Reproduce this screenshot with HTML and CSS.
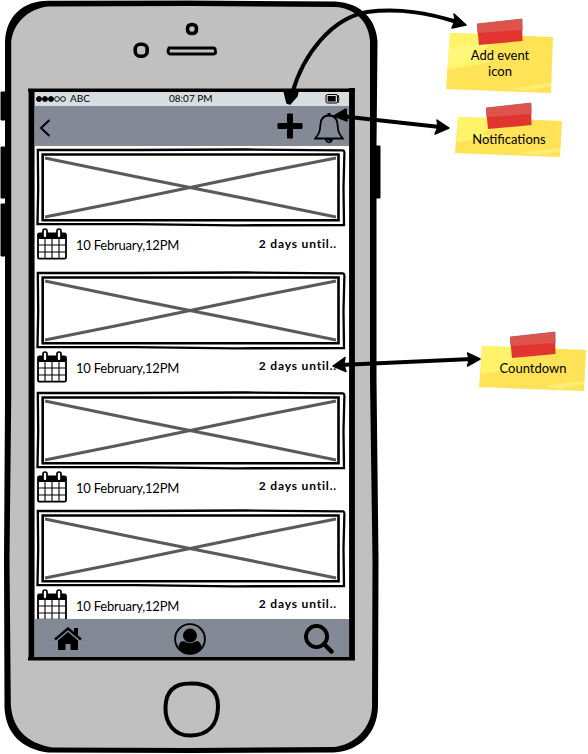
FILE: index.html
```
<!DOCTYPE html>
<html lang="en">
<head>
<meta charset="utf-8">
<title>Event list wireframe</title>
<link rel="stylesheet" href="styles.css">
</head>
<body>
<svg width="0" height="0" class="defs">
  <symbol id="frame" viewBox="0 0 314 80">
    <path d="M2.8 1.8L100 2L210 1.5L308 2.3Q309.8 2.5 309.3 8L308.5 40L309 77L200 77.3L100 76.2L2.5 76L3.2 40Z" fill="#fff" stroke="#000" stroke-width="2.3"/>
    <path d="M7.7 6.5H303.5V72.2H7.7Z" fill="none" stroke="#000" stroke-width="2.6"/>
    <path d="M10 10L100 28.5L155 39.5L225 53.5L301 69M10 69L80 55L155 39.5L225 25L301 10" fill="none" stroke="#5a5a5a" stroke-width="3.1"/>
  </symbol>
  <symbol id="calendar" viewBox="0 0 30 32">
    <rect x="1" y="5.3" width="28" height="25.4" rx="1.5" fill="#fff" stroke="#000" stroke-width="1.8"/>
    <rect x="1" y="5" width="28" height="6" fill="#000"/>
    <path d="M8 11v19M15 11v19M22 11v19M1 17h28M1 24h28" stroke="#000" stroke-width="1.1"/>
    <rect x="6" y="1" width="4" height="9" rx="2" fill="#fff" stroke="#000" stroke-width="1.7"/>
    <rect x="20" y="1" width="4" height="9" rx="2" fill="#fff" stroke="#000" stroke-width="1.7"/>
  </symbol>
  <symbol id="note-tape" viewBox="0 0 48 28">
    <path d="M1 6L46 1L46.5 23L3 27Z" fill="#e2342f"/>
    <path d="M1 6L46 1L46.3 12L1.5 15Z" fill="#de544d"/>
    <path d="M1 6L46 1V12" fill="none" stroke="#a66" stroke-width=".8"/>
  </symbol>
</svg>

<main class="canvas">
  <svg class="device" width="588" height="754" viewBox="0 0 588 754">
    <path d="M1 92h10v28H1zM1 147h10v51H1zM1 204h10v52H1zM372 146h8v52h-8z" stroke="#000" stroke-width="1"/>
    <path d="M48 0.800L190 0.500L335 1.500C362 3 376 20 377.500 41L376.500 146V380L378.500 560L378 707C377 735 358 751 334 752.500L190 753L48 752.500C22 749 6 734 4.500 708L4 560L5 400L5 42C6 16 23 1 48 0.800Z"/>
    <path d="M48 6.500L190 6L335 7C356 8 369 23 370 41L370 380L372.500 560L372 707C371 729 354 745 334 747L190 748L52 747.500C26 743 12 728 10.800 704L9.500 560L11.200 400L11.200 42C13 24 27 9 48 6.500Z" fill="#c0c0c0"/>
    <path d="M192 24.500C195.500 24.500 196.500 26 196.500 29C196.500 32 195 33.500 192 33.500C188.500 33.500 187.500 32 187.500 29C187.500 26 189 24.500 192 24.500Z" fill="none" stroke="#000" stroke-width="3.600"/>
    <rect x="135.200" y="44.200" width="12" height="12" rx="5" fill="none" stroke="#000" stroke-width="3.600"/>
    <path d="M169 48L214 48Q215.500 48 215.500 53Q215 54 212 54L171 54Q168 54 168 51Z" fill="none" stroke="#000" stroke-width="2.900"/>
    <path d="M28 90.200H355M28 658.700H355" stroke="#000" stroke-width="3.500" fill="none"/>
    <path d="M31.500 90V659M352 88V659" stroke="#000" stroke-width="5.800"/>
    <path d="M190 683.500C208 683 218 690 218 706C218 725 208 735 191 735.500C174 736 165 723 165.500 707C166 691 174 683.500 190 683.500Z" fill="none" stroke="#000" stroke-width="4"/>
  </svg>

  <section class="screen">
    <div class="status">
      <svg width="32" height="12" viewBox="0 0 32 12"><g stroke="#000" stroke-width=".9"><circle cx="4" cy="6" r="2.500"/><circle cx="10" cy="6" r="2.500"/><circle cx="16" cy="6" r="2.500"/><circle cx="22" cy="6" r="2.400" fill="none"/><circle cx="28" cy="6" r="2.400" fill="none"/></g></svg>
      <span class="carrier">ABC</span>
      <span class="clock">08:07 PM</span>
      <svg class="battery" width="16" height="12" viewBox="0 0 16 12"><rect x="1" y="1.500" width="11.500" height="8.500" rx="1.500" fill="none" stroke="#000"/><path d="M2.700 3h8v5.500h-8z"/><path d="M13 2Q15 6 13 10" fill="none" stroke="#000"/></svg>
    </div>
    <header class="nav">
      <svg width="12" height="20" viewBox="0 0 12 20"><path d="M10.500 2L2 10L10.500 18" fill="none" stroke="#000" stroke-width="2"/></svg>
      <svg class="add" width="26" height="26" viewBox="0 0 26 26"><path d="M10 1.500Q10 .5 11 .5h4q1 0 1 1V10h8.500q1 0 1 1v4q0 1-1 1H16v8.500q0 1-1 1h-4q-1 0-1-1V16H1.500q-1 0-1-1v-4q0-1 1-1H10Z"/></svg>
      <svg width="30" height="32" viewBox="0 0 30 32"><path d="M1.200 26.500C6 21 6 18 6.500 12C7 6.500 10 3.500 15 3.500S23 6.500 23.500 12C24 18 24 21 28.800 26.500Z" fill="none" stroke="#000" stroke-width="1.800"/><path d="M13.500 3V1h3v2z"/><path d="M11 27C11 32.500 19 32.500 19 27Z"/><path d="M13.500 28Q14 29.500 15.500 29.500" fill="none" stroke="#848996"/></svg>
    </header>
    <div class="events">
      <article class="event first"><svg class="picture"><use href="#frame"/></svg><div class="info"><svg class="cal"><use href="#calendar"/></svg><span class="date">10 February,12PM</span><b class="left">2 days until..</b></div></article>
      <article class="event second"><svg class="picture"><use href="#frame"/></svg><div class="info"><svg class="cal"><use href="#calendar"/></svg><span class="date">10 February,12PM</span><b class="left">2 days until..</b></div></article>
      <article class="event third"><svg class="picture"><use href="#frame"/></svg><div class="info"><svg class="cal"><use href="#calendar"/></svg><span class="date">10 February,12PM</span><b class="left">2 days until..</b></div></article>
      <article class="event"><svg class="picture"><use href="#frame"/></svg><div class="info"><svg class="cal"><use href="#calendar"/></svg><span class="date">10 February,12PM</span><b class="left">2 days until..</b></div></article>
    </div>
    <footer class="tabs">
      <svg width="28" height="24" viewBox="0 0 28 24"><path d="M1 12.500L14 1.500L27 12.500" fill="none" stroke="#000" stroke-width="2.400"/><path d="M20 1h4v9l-4-4zM4 13.500L14 5L24 13.500V22Q24 23 23 23H16.500V17H11.500V23H5Q4 23 4 22Z"/></svg>
      <svg width="32" height="32" viewBox="0 0 32 32"><circle cx="16" cy="16" r="14.900" fill="none" stroke="#000" stroke-width="1.900"/><circle cx="16" cy="12.600" r="7"/><path d="M4.500 24C5 19 8 17.500 10.500 18.500Q16 22 21.500 18.500C24 17.500 27 19 27.500 24Q23 31 16 31T4.500 24Z"/></svg>
      <svg width="30" height="30" viewBox="0 0 30 30"><circle cx="12.500" cy="12.500" r="10.600" fill="none" stroke="#000" stroke-width="3.900"/><path d="M20 20L27.500 27.500" stroke="#000" stroke-width="4.500" stroke-linecap="round"/></svg>
    </footer>
  </section>

  <aside class="note add-note">
    <svg class="paper" viewBox="0 0 108 62" preserveAspectRatio="none"><path d="M4 1L35 2L107 5L105 61L76 60L0 57Z" fill="#ffe356"/><path d="M4 1L35 2L60 3L28 24L45 30L2 38Z" fill="#fff36a"/><path d="M3 16L48 10L25 21L60 24L2 33Z" fill="#fffa84" opacity=".65"/><path d="M65 57L104 51L105 54L80 59Z" fill="#ffee76"/></svg>
    <svg class="tape"><use href="#note-tape"/></svg>
    <p>Add event<br>icon</p>
  </aside>
  <aside class="note bell-note">
    <svg class="paper" viewBox="0 0 108 41" preserveAspectRatio="none"><path d="M3 1L35 2L107 5L105 41L76 40L0 37Z" fill="#ffe356"/><path d="M3 1L35 2L55 3L27 18L40 21L2 26Z" fill="#fff36a"/><path d="M65 37L104 32L105 35L80 39Z" fill="#ffee76"/></svg>
    <svg class="tape"><use href="#note-tape"/></svg>
    <p>Notifications</p>
  </aside>
  <aside class="note count-note">
    <svg class="paper" viewBox="0 0 108 46" preserveAspectRatio="none"><path d="M3 1L35 2L107 5L105 46L76 45L0 42Z" fill="#ffe356"/><path d="M3 1L35 2L55 3L27 19L40 23L2 29Z" fill="#fff36a"/><path d="M65 41L104 36L105 39L80 44Z" fill="#ffee76"/></svg>
    <svg class="tape"><use href="#note-tape"/></svg>
    <p>Countdown</p>
  </aside>

  <svg class="arrows" width="588" height="754" viewBox="0 0 588 754">
    <g fill="none" stroke="#000" stroke-width="4"><path d="M292 94C303 54 332 18 367 12C400 8 428 13 457 22"/><path d="M340 116L440 127"/><path d="M340 365L472 359"/></g>
    <path d="M284 91Q292 94 298 91L297 96L290 104L287 103ZM466 25L454 14Q456 20 452 28ZM334 116L346 109L347 121ZM449 128L437 120Q439 127 435 134ZM333 366L345 357.500Q343 365 346 371.500ZM480 359L467.500 353Q470 360 467.500 366Z" stroke="#000" stroke-width="1.500" stroke-linejoin="round"/>
  </svg>
</main>
</body>
</html>
```
FILE: styles.css
```
* { box-sizing: border-box; }
body { margin: 0; background: #fff; color: #000; font-family: Lato, "Noto Sans", sans-serif; overflow: hidden; }
svg { display: block; flex: none; }
.defs { position: absolute; }
.canvas { position: relative; width: 588px; height: 754px; padding: 92px 0 0 35px; }
.device, .arrows { position: absolute; left: 0; top: 0; }
.arrows { pointer-events: none; }
.screen { position: relative; width: 314px; height: 565px; background: #fff; display: flex; flex-direction: column; }
.status { height: 14px; background: #d6dee1; display: flex; align-items: center; font-size: 10px; line-height: 12px; }
.status span { position: relative; top: -1px; }
.carrier { width: 98px; padding-left: 3px; }
.clock { margin-left: 4px; white-space: nowrap; }
.battery { margin-left: auto; margin-right: 8px; }
.nav { height: 40px; background: #848996; display: flex; align-items: center; padding: 0 5px 0 4px; }
.nav svg { margin-top: 3px; }
.nav .add { margin-left: auto; margin-right: 11px; margin-top: -1px; }
.events { flex: 1; padding-top: 2px; overflow: hidden; }
.event { height: 118px; }
.first { height: 123px; }
.second { height: 120px; }
.picture { width: 314px; height: 80px; }
.info { display: flex; align-items: flex-start; height: 34px; padding-left: 2px; }
.cal { width: 30px; height: 32px; }
.date { margin: 8px 0 0 9px; font-size: 13px; line-height: 18px; letter-spacing: -.22px; white-space: nowrap; }
.left { margin: 6px 12px 0 auto; font-size: 12px; line-height: 17px; letter-spacing: .83px; white-space: nowrap; }
.first .left { margin-top: 7px; }
.tabs { height: 38px; background: #848996; display: flex; align-items: center; justify-content: space-between; padding: 1px 15px 0 19px; }
.tabs svg:nth-child(2) { margin-right: 7px; }
.note { position: absolute; width: 108px; text-align: center; }
.paper { width: 108px; position: absolute; left: 0; top: 0; }
.tape { width: 48px; height: 28px; position: absolute; left: 30px; top: -14px; }
.note p { position: relative; margin: 0; font-size: 13px; line-height: 16px; }
.add-note { left: 446px; top: 32px; padding-top: 15px; }
.add-note .paper { height: 62px; }
.bell-note { left: 455px; top: 116px; padding-top: 15px; }
.bell-note .paper { height: 41px; }
.count-note { left: 479px; top: 345px; padding-top: 15px; }
.count-note .paper { height: 46px; }
```
